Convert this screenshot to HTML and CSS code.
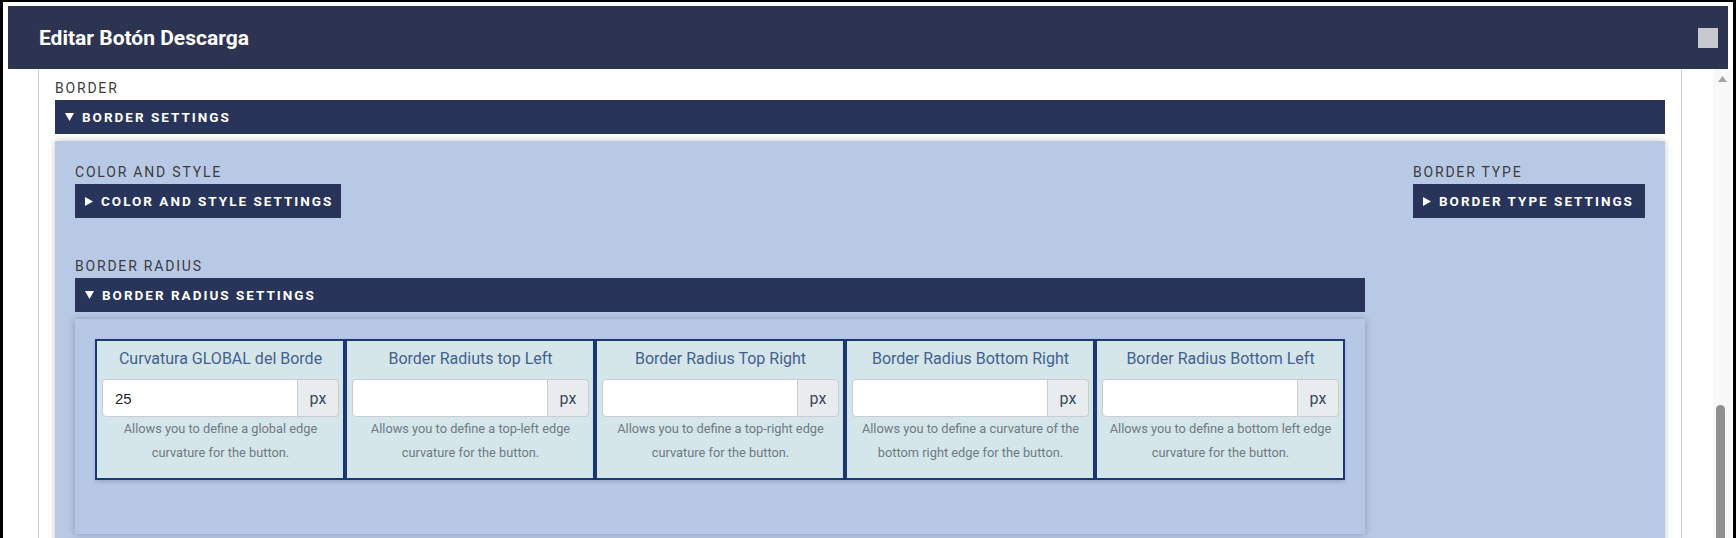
FILE: index.html
```html
<!DOCTYPE html>
<html lang="es">
<head>
    <meta charset="UTF-8">
    <meta name="viewport" content="width=device-width, initial-scale=1.0">
    <title>Editar Botón Descarga</title>
    <link rel="stylesheet" href="styles.css">
</head>
<body>
<div class="frame">
    <div class="modal-header">
        <h2 class="modal-title">Editar Botón Descarga</h2>
        <span class="close-box"></span>
    </div>

    <div class="modal-body">
        <div class="content">
            <div class="section-label">BORDER</div>
            <div class="bar">
                <svg class="tri" width="9" height="8" viewBox="0 0 9 8"><path d="M0 0H9L4.5 8Z" fill="#fff"/></svg>
                BORDER SETTINGS
            </div>

            <div class="panel">
                <div class="col-main">
                    <div class="section-label">COLOR AND STYLE</div>
                    <div class="bar bar-btn">
                        <svg class="tri" width="8" height="9" viewBox="0 0 8 9"><path d="M0 0L8 4.5L0 9Z" fill="#fff"/></svg>
                        COLOR AND STYLE SETTINGS
                    </div>

                    <div class="section-label radius-label">BORDER RADIUS</div>
                    <div class="bar">
                        <svg class="tri" width="9" height="8" viewBox="0 0 9 8"><path d="M0 0H9L4.5 8Z" fill="#fff"/></svg>
                        BORDER RADIUS SETTINGS
                    </div>

                    <div class="radius-panel">
                        <div class="cards">
                            <div class="card">
                                <div class="card-title">Curvatura GLOBAL del Borde</div>
                                <div class="input-group">
                                    <input type="text" value="25">
                                    <span class="addon">px</span>
                                </div>
                                <div class="help">Allows you to define a global edge curvature for the button.</div>
                            </div>
                            <div class="card">
                                <div class="card-title">Border Radiuts top Left</div>
                                <div class="input-group">
                                    <input type="text" value="">
                                    <span class="addon">px</span>
                                </div>
                                <div class="help">Allows you to define a top-left edge curvature for the button.</div>
                            </div>
                            <div class="card">
                                <div class="card-title">Border Radius Top Right</div>
                                <div class="input-group">
                                    <input type="text" value="">
                                    <span class="addon">px</span>
                                </div>
                                <div class="help">Allows you to define a top-right edge curvature for the button.</div>
                            </div>
                            <div class="card">
                                <div class="card-title">Border Radius Bottom Right</div>
                                <div class="input-group">
                                    <input type="text" value="">
                                    <span class="addon">px</span>
                                </div>
                                <div class="help">Allows you to define a curvature of the bottom right edge for the button.</div>
                            </div>
                            <div class="card">
                                <div class="card-title">Border Radius Bottom Left</div>
                                <div class="input-group">
                                    <input type="text" value="">
                                    <span class="addon">px</span>
                                </div>
                                <div class="help">Allows you to define a bottom left edge curvature for the button.</div>
                            </div>
                        </div>
                    </div>
                </div>

                <div class="col-side">
                    <div class="section-label">BORDER TYPE</div>
                    <div class="bar bar-btn">
                        <svg class="tri" width="8" height="9" viewBox="0 0 8 9"><path d="M0 0L8 4.5L0 9Z" fill="#fff"/></svg>
                        BORDER TYPE SETTINGS
                    </div>
                </div>
            </div>
        </div>

        <div class="scrollbar">
            <svg class="scroll-up" width="9" height="6" viewBox="0 0 9 6"><path d="M0 6L4.5 0L9 6Z" fill="#a3a3a3"/></svg>
            <div class="thumb"></div>
        </div>
    </div>
</div>
</body>
</html>
```

FILE: styles.css
```css
body {
    margin: 0;
    background: #fff;
    font-family: Roboto, "Liberation Sans", sans-serif;
}
.frame {
    height: 538px;
    box-sizing: border-box;
    border: solid #000;
    border-width: 2px 3px 0 3px;
    padding: 4px 5px 0 5px;
    overflow: hidden;
}
.modal-header {
    height: 63px;
    background: #2d3452;
    display: flex;
    align-items: center;
    justify-content: space-between;
    padding: 0 10px 0 31px;
}
.modal-title {
    margin: 0;
    color: #fff;
    font-size: 21px;
    font-weight: 700;
}
.close-box {
    width: 20px;
    height: 20px;
    background: #c8c9d0;
}
.modal-body {
    display: flex;
    margin-right: -3px;
    height: 470px;
}
.content {
    width: 1644px;
    box-sizing: border-box;
    margin-left: 30px;
    border-left: 1px solid #cfcfcf;
    border-right: 1px solid #cfcfcf;
    padding: 10px 16px 0 16px;
}
.section-label {
    font-size: 14px;
    line-height: 18px;
    letter-spacing: 1.8px;
    color: #3c3c3c;
    margin-bottom: 3px;
}
.bar {
    display: flex;
    align-items: center;
    height: 34px;
    background: #283459;
    color: #fff;
    font-size: 13.5px;
    font-weight: 700;
    letter-spacing: 2px;
    padding-left: 10px;
}
.tri {
    margin-right: 8px;
}
.bar-btn {
    display: inline-flex;
    padding-right: 8px;
}
.panel {
    margin-top: 7px;
    background: #b8c9e6;
    box-shadow: 0 0 7px rgba(0, 0, 0, 0.22);
    padding: 22px 20px 40px 20px;
    display: flex;
    justify-content: space-between;
}
.col-main {
    width: 1290px;
}
.col-side {
    width: 232px;
}
.col-side .bar-btn {
    display: flex;
}
.radius-label {
    margin-top: 39px;
}
.radius-panel {
    margin-top: 7px;
    background: #b7c8e6;
    box-shadow: 0 0 7px rgba(0, 0, 0, 0.25);
    padding: 20px 20px 54px 20px;
}
.cards {
    display: grid;
    grid-template-columns: repeat(5, minmax(0, 1fr));
}
.card {
    min-width: 0;
    background: #d4e6ea;
    border: 2px solid #1b3878;
    padding: 7px 4px 13px 5px;
    text-align: center;
    box-shadow: 0 2px 4px rgba(0, 0, 0, 0.15);
}
.card-title {
    font-size: 16px;
    line-height: 22px;
    color: #44608f;
    margin-bottom: 9px;
}
.input-group {
    display: flex;
    height: 38px;
}
.input-group input {
    flex: 1;
    width: 0;
    min-width: 0;
    box-sizing: border-box;
    border: 1px solid #c9cdd2;
    border-radius: 4px 0 0 4px;
    padding: 0 12px;
    font-family: "Liberation Sans", Arial, sans-serif;
    font-size: 15px;
    color: #212529;
    background: #fff;
}
.addon {
    width: 41px;
    box-sizing: border-box;
    display: flex;
    align-items: center;
    justify-content: center;
    background: #e9ecef;
    border: 1px solid #c9cdd2;
    border-left: none;
    border-radius: 0 4px 4px 0;
    font-size: 16px;
    color: #3d4a5a;
}
.help {
    font-size: 12.8px;
    line-height: 24px;
    color: #6f7a82;
    padding: 0 1px;
}
.scrollbar {
    width: 18px;
    margin-left: 31px;
    background: #f8f8f8;
    position: relative;
}
.scroll-up {
    display: block;
    margin: 7px auto 0 auto;
}
.thumb {
    position: absolute;
    left: 3px;
    top: 336px;
    width: 9px;
    height: 200px;
    background: #8f8f8f;
    border-radius: 5px 5px 0 0;
}
```
